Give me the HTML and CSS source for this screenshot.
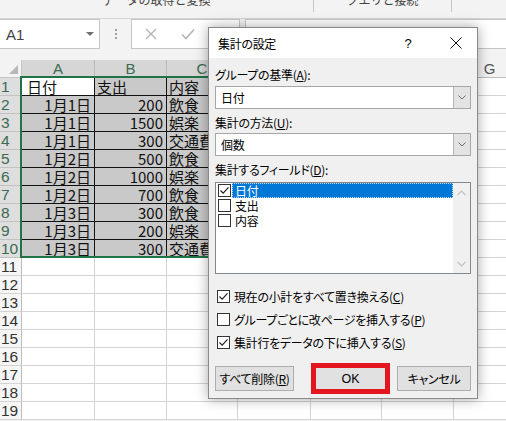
FILE: index.html
```html
<!DOCTYPE html>
<html lang="ja">
<head>
<meta charset="utf-8">
<title>集計の設定</title>
<link rel="stylesheet" href="styles.css">
</head>
<body>
<div class="app">
  <div class="ribbon">
    <div class="grp g1"><span>データの取得と変換</span></div>
    <div class="grp g2"><span>クエリと接続</span></div>
  </div>

  <div class="fbar">
    <div class="namebox"><span>A1</span><i class="tri"></i></div>
    <div class="dots"><b></b><b></b><b></b></div>
    <div class="fxbox">
      <svg class="fx-x" width="12" height="12" viewBox="0 0 12 12"><path d="M1 1L11 11M11 1L1 11" stroke="#b5b5b5" stroke-width="1.4" fill="none"/></svg>
      <svg class="fx-ok" width="14" height="12" viewBox="0 0 14 12"><path d="M1 6.5L5 10.5L13 1.5" stroke="#b5b5b5" stroke-width="1.6" fill="none"/></svg>
    </div>
    <div class="inputbox"></div>
  </div>

  <div class="sheet">
    <div class="corner"><i></i></div>
    <div class="ch sel">A</div><div class="ch sel">B</div><div class="ch sel">C</div><div class="ch">D</div><div class="ch">E</div><div class="ch">F</div><div class="ch">G</div>

    <div class="rh sel">1</div><div class="c d act">日付</div><div class="c d">支出</div><div class="c d">内容</div><div class="c"></div><div class="c"></div><div class="c"></div><div class="c"></div>
    <div class="rh sel">2</div><div class="c d r">1月1日</div><div class="c d r">200</div><div class="c d">飲食</div><div class="c"></div><div class="c"></div><div class="c"></div><div class="c"></div>
    <div class="rh sel">3</div><div class="c d r">1月1日</div><div class="c d r">1500</div><div class="c d">娯楽</div><div class="c"></div><div class="c"></div><div class="c"></div><div class="c"></div>
    <div class="rh sel">4</div><div class="c d r">1月1日</div><div class="c d r">300</div><div class="c d">交通費</div><div class="c"></div><div class="c"></div><div class="c"></div><div class="c"></div>
    <div class="rh sel">5</div><div class="c d r">1月2日</div><div class="c d r">500</div><div class="c d">飲食</div><div class="c"></div><div class="c"></div><div class="c"></div><div class="c"></div>
    <div class="rh sel">6</div><div class="c d r">1月2日</div><div class="c d r">1000</div><div class="c d">娯楽</div><div class="c"></div><div class="c"></div><div class="c"></div><div class="c"></div>
    <div class="rh sel">7</div><div class="c d r">1月2日</div><div class="c d r">700</div><div class="c d">飲食</div><div class="c"></div><div class="c"></div><div class="c"></div><div class="c"></div>
    <div class="rh sel">8</div><div class="c d r">1月3日</div><div class="c d r">300</div><div class="c d">飲食</div><div class="c"></div><div class="c"></div><div class="c"></div><div class="c"></div>
    <div class="rh sel">9</div><div class="c d r">1月3日</div><div class="c d r">200</div><div class="c d">娯楽</div><div class="c"></div><div class="c"></div><div class="c"></div><div class="c"></div>
    <div class="rh sel">10</div><div class="c d r">1月3日</div><div class="c d r">300</div><div class="c d">交通費</div><div class="c"></div><div class="c"></div><div class="c"></div><div class="c"></div>
    <div class="rh">11</div><div class="c"></div><div class="c"></div><div class="c"></div><div class="c"></div><div class="c"></div><div class="c"></div><div class="c"></div>
    <div class="rh">12</div><div class="c"></div><div class="c"></div><div class="c"></div><div class="c"></div><div class="c"></div><div class="c"></div><div class="c"></div>
    <div class="rh">13</div><div class="c"></div><div class="c"></div><div class="c"></div><div class="c"></div><div class="c"></div><div class="c"></div><div class="c"></div>
    <div class="rh">14</div><div class="c"></div><div class="c"></div><div class="c"></div><div class="c"></div><div class="c"></div><div class="c"></div><div class="c"></div>
    <div class="rh">15</div><div class="c"></div><div class="c"></div><div class="c"></div><div class="c"></div><div class="c"></div><div class="c"></div><div class="c"></div>
    <div class="rh">16</div><div class="c"></div><div class="c"></div><div class="c"></div><div class="c"></div><div class="c"></div><div class="c"></div><div class="c"></div>
    <div class="rh">17</div><div class="c"></div><div class="c"></div><div class="c"></div><div class="c"></div><div class="c"></div><div class="c"></div><div class="c"></div>
    <div class="rh">18</div><div class="c"></div><div class="c"></div><div class="c"></div><div class="c"></div><div class="c"></div><div class="c"></div><div class="c"></div>
    <div class="rh">19</div><div class="c"></div><div class="c"></div><div class="c"></div><div class="c"></div><div class="c"></div><div class="c"></div><div class="c"></div>

    <div class="selection"></div>
  </div>

  <div class="dlg">
    <div class="dlg-title">
      <span class="ttl">集計の設定</span>
      <span class="help">?</span>
      <span class="close"><svg width="12" height="12" viewBox="0 0 12 12"><path d="M0.5 0.5L11.5 11.5M11.5 0.5L0.5 11.5" stroke="#111" stroke-width="1" fill="none"/></svg></span>
    </div>
    <div class="dlg-body">
      <div class="lbl l1">グループの基準(<u>A</u>):</div>
      <div class="combo c1"><span>日付</span><span class="drop"><svg width="8" height="5" viewBox="0 0 8 5"><path d="M0.5 0.5L4 4L7.5 0.5" stroke="#6d6d6d" fill="none"/></svg></span></div>
      <div class="lbl l2">集計の方法(<u>U</u>):</div>
      <div class="combo c2"><span>個数</span><span class="drop"><svg width="8" height="5" viewBox="0 0 8 5"><path d="M0.5 0.5L4 4L7.5 0.5" stroke="#6d6d6d" fill="none"/></svg></span></div>
      <div class="lbl l3">集計するフィールド(<u>D</u>):</div>
      <div class="listbox">
        <div class="items">
          <div class="item"><span class="cb"><svg width="11" height="11" viewBox="0 0 11 11"><path d="M1.5 5.5L4.2 8.2L9.5 2.3" stroke="#222" stroke-width="1.2" fill="none"/></svg></span><span class="itxt hl">日付</span></div>
          <div class="item"><span class="cb"></span><span class="itxt">支出</span></div>
          <div class="item"><span class="cb"></span><span class="itxt">内容</span></div>
        </div>
        <div class="vscroll">
          <svg width="9" height="6" viewBox="0 0 9 6"><path d="M0.5 5L4.5 1L8.5 5" stroke="#c2c2c2" stroke-width="1.2" fill="none"/></svg>
          <svg width="9" height="6" viewBox="0 0 9 6"><path d="M0.5 1L4.5 5L8.5 1" stroke="#c2c2c2" stroke-width="1.2" fill="none"/></svg>
        </div>
      </div>
      <div class="opts">
        <div class="opt"><span class="cb"><svg width="11" height="11" viewBox="0 0 11 11"><path d="M1.5 5.5L4.2 8.2L9.5 2.3" stroke="#222" stroke-width="1.2" fill="none"/></svg></span><span>現在の小計をすべて置き換える(<u>C</u>)</span></div>
        <div class="opt"><span class="cb"></span><span>グループごとに改ページを挿入する(<u>P</u>)</span></div>
        <div class="opt"><span class="cb"><svg width="11" height="11" viewBox="0 0 11 11"><path d="M1.5 5.5L4.2 8.2L9.5 2.3" stroke="#222" stroke-width="1.2" fill="none"/></svg></span><span>集計行をデータの下に挿入する(<u>S</u>)</span></div>
      </div>
      <div class="btns">
        <button class="btn b-del">すべて削除(<u>R</u>)</button>
        <div class="mark"><button class="btn b-ok">OK</button></div>
        <button class="btn b-cancel">キャンセル</button>
      </div>
    </div>
  </div>
</div>
</body>
</html>
```

FILE: styles.css
```css
* { box-sizing: border-box; }

body {
  margin: 0;
  width: 506px;
  height: 421px;
  overflow: hidden;
  background: #ffffff;
  font-family: "Noto Sans CJK JP", "Noto Sans", sans-serif;
}

.app {
  position: relative;
  width: 506px;
  height: 421px;
  overflow: hidden;
  background: #f3f3f3;
}

/* ribbon group labels */
.ribbon {
  display: flex;
  height: 19px;
  background: #f3f3f3;
  border-bottom: 1px solid #d5d5d5;
  overflow: hidden;
}
.grp {
  flex: none;
  height: 12px;
  font-size: 12px;
  line-height: 14px;
  color: #444;
  text-align: center;
  border-right: 1px solid #c6c6c6;
  overflow: hidden;
}
.grp span { display: block; margin-top: -7px; }
.g1 { width: 314px; }
.g2 { width: 138px; }

/* formula bar */
.fbar {
  display: flex;
  align-items: flex-start;
  height: 41px;
  background: #f3f3f3;
}
.namebox {
  width: 100px;
  height: 30px;
  background: #fff;
  border: 1px solid #c6c6c6;
  border-left: 0;
  display: flex;
  align-items: center;
  padding-left: 6px;
  font-family: "Liberation Sans", sans-serif;
  font-size: 15px;
  color: #444;
}
.namebox .tri {
  margin-left: auto;
  margin-right: 5px;
  width: 0;
  height: 0;
  border-left: 4px solid transparent;
  border-right: 4px solid transparent;
  border-top: 4px solid #707070;
}
.dots {
  width: 31px;
  height: 30px;
  display: flex;
  flex-direction: column;
  align-items: center;
  justify-content: center;
  gap: 2px;
}
.dots b { width: 2px; height: 2px; background: #a0a0a0; }
.fxbox {
  width: 109px;
  height: 30px;
  background: #fff;
  border: 1px solid #c6c6c6;
  display: flex;
  align-items: center;
  padding-left: 13px;
}
.fx-ok { margin-left: 24px; }
.inputbox {
  margin-left: 5px;
  flex: 1;
  height: 30px;
  background: #fff;
  border: 1px solid #c6c6c6;
  border-right: 0;
}

/* sheet grid */
.sheet {
  position: relative;
  display: grid;
  grid-template-columns: 22px 73px 72px 71px 73px 71px 72px 72px;
  grid-auto-rows: 18px;
  background: #fff;
  font-size: 15px;
  line-height: 17px;
}
.corner {
  position: relative;
  background: #f3f3f3;
  border-right: 1px solid #c6c6c6;
  border-bottom: 1px solid #c6c6c6;
}
.corner i {
  position: absolute;
  right: 3px;
  bottom: 3px;
  width: 0;
  height: 0;
  border-left: 9px solid transparent;
  border-bottom: 9px solid #b7b7b7;
}
.ch {
  background: #f3f3f3;
  border-right: 1px solid #d4d4d4;
  border-bottom: 1px solid #bdbdbd;
  text-align: center;
  color: #555;
  font-family: "Liberation Sans", sans-serif;
  font-size: 15px;
  line-height: 18px;
}
.ch.sel {
  background: #d6d6d6;
  color: #3b6a50;
  border-right-color: #bababa;
  border-bottom: 2px solid #217346;
}
.rh {
  background: #f6f6f6;
  border-right: 1px solid #bdbdbd;
  border-bottom: 1px solid #d4d4d4;
  color: #333;
  font-family: "Liberation Sans", sans-serif;
  font-size: 15.5px;
  line-height: 18px;
  padding-left: 1px;
  white-space: nowrap;
}
.rh.sel {
  background: #dedede;
  color: #3b6a50;
  border-bottom-color: #c2c2c2;
}
.c {
  border-right: 1px solid #d4d4d4;
  border-bottom: 1px solid #d4d4d4;
  padding: 0 2px;
  white-space: nowrap;
  color: #111;
}
.c.d {
  background: #c9c9c9;
  border-right-color: #111;
  border-bottom-color: #111;
}
.c.act { background: #fff; padding-left: 5px; }
.c.r { text-align: right; padding-right: 3px; }

.selection {
  position: absolute;
  left: 20px;
  top: 16px;
  width: 220px;
  height: 182px;
  border: 2px solid #217346;
  pointer-events: none;
}

/* dialog */
.dlg {
  position: absolute;
  left: 208px;
  top: 27px;
  width: 270px;
  height: 372px;
  background: #f0f0f0;
  border: 1px solid #8a8a8a;
  box-shadow: 0 0 12px rgba(0, 0, 0, 0.35);
  font-size: 12px;
  font-feature-settings: "palt";
  letter-spacing: -0.3px;
  color: #000;
  display: flex;
  flex-direction: column;
}
.dlg u { text-decoration: underline; text-underline-offset: 1px; }
.dlg-title {
  height: 30px;
  background: #fff;
  display: flex;
  align-items: center;
  padding-left: 9px;
  flex: none;
}
.ttl { font-size: 12px; }
.help {
  margin-left: auto;
  width: 54px;
  text-align: center;
  font-size: 13px;
  font-family: "Liberation Sans", sans-serif;
}
.close {
  width: 42px;
  display: flex;
  justify-content: center;
  align-items: center;
}
.dlg-body {
  padding: 9px 6px 0 6px;
  display: flex;
  flex-direction: column;
}
.lbl { height: 16px; line-height: 16px; }
.l2 { margin-top: 6px; }
.l3 { margin-top: 6px; }
.combo {
  height: 23px;
  background: #fff;
  border: 1px solid #a6a6a6;
  display: flex;
  align-items: center;
  padding-left: 5px;
}
.c1 { margin-top: 3px; }
.c2 { margin-top: 2px; }
.drop {
  margin-left: auto;
  width: 17px;
  height: 100%;
  background: #e3e3e3;
  border-left: 1px solid #b4b4b4;
  display: flex;
  align-items: center;
  justify-content: center;
}
.listbox {
  margin-top: 4px;
  height: 92px;
  background: #fff;
  border: 1px solid #828790;
  display: flex;
}
.items { flex: 1; padding-left: 2px; }
.item {
  height: 15px;
  display: flex;
  align-items: center;
}
.cb {
  flex: none;
  width: 13px;
  height: 13px;
  border: 1px solid #333;
  background: #fff;
  display: flex;
  align-items: center;
  justify-content: center;
}
.itxt {
  flex: 1;
  height: 15px;
  line-height: 13px;
  margin-left: 1px;
  padding-left: 2px;
  border: 1px solid transparent;
}
.itxt.hl {
  background: #0078d7;
  color: #fff;
  border: 1px dotted #c7dcef;
}
.vscroll {
  width: 17px;
  background: #f0f0f0;
  display: flex;
  flex-direction: column;
  align-items: center;
  justify-content: space-between;
  padding: 7px 0 6px;
}
.opts { margin-top: 11px; padding-left: 2px; }
.opt {
  height: 23px;
  display: flex;
  align-items: center;
  gap: 4px;
}
.btns {
  margin-top: 9px;
  height: 31px;
  display: flex;
  align-items: center;
}
.btn {
  font-family: inherit;
  font-size: 12px;
  font-feature-settings: "palt";
  letter-spacing: -0.3px;
  color: #000;
  background: #e1e1e1;
  border: 1px solid #adadad;
  height: 25px;
  padding: 0;
}
.b-del { width: 79px; }
.mark {
  margin-left: 17px;
  width: 79px;
  height: 31px;
  border: 5px solid #e3151e;
  display: flex;
}
.b-ok { flex: 1; height: 21px; border: 0; font-family: "Liberation Sans", sans-serif; font-size: 12.5px; letter-spacing: 0; }
.b-cancel { margin-left: 7px; width: 74px; }
```
